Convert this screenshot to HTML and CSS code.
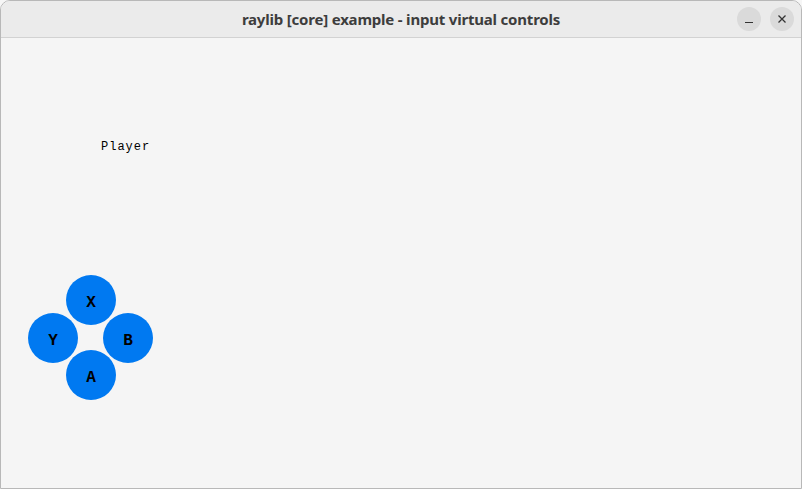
FILE: index.html
```html
<!DOCTYPE html>
<html>
<head>
<meta charset="utf-8">
<link rel="stylesheet" href="styles.css">
</head>
<body>
<div class="window">
  <header class="titlebar">
    <div class="title">raylib [core] example - input virtual controls</div>
    <div class="controls">
      <span class="wbtn"><svg width="10" height="10" viewBox="0 0 10 10"><path d="M1 8.5h8" stroke="#333" stroke-width="1.2"/></svg></span>
      <span class="wbtn"><svg width="10" height="10" viewBox="0 0 10 10"><path d="M1.5 1.5l7 7M8.5 1.5l-7 7" stroke="#333" stroke-width="1.3"/></svg></span>
    </div>
  </header>
  <main class="canvas">
    <div class="player">Player</div>
    <div class="pad pad-x">X</div>
    <div class="pad pad-y">Y</div>
    <div class="pad pad-b">B</div>
    <div class="pad pad-a">A</div>
  </main>
</div>
</body>
</html>
```
FILE: styles.css
```css
html, body {
  margin: 0;
  padding: 0;
  background: #f6f6f6;
}
.window {
  width: 802px;
  height: 489px;
  box-sizing: border-box;
  border: 1px solid #b8b8b8;
  border-radius: 10px 10px 0 0;
  overflow: hidden;
  display: flex;
  flex-direction: column;
  background: #f5f5f5;
}
.titlebar {
  height: 36px;
  flex: none;
  background: #ebebeb;
  border-bottom: 1px solid #d2d2d2;
  display: flex;
  align-items: center;
  justify-content: center;
  position: relative;
}
.title {
  font-family: "Noto Sans", sans-serif;
  font-weight: bold;
  font-size: 15px;
  color: #3d3d3d;
  letter-spacing: -0.2px;
}
.controls {
  position: absolute;
  right: 7px;
  top: 6px;
  display: flex;
  gap: 9px;
}
.wbtn {
  width: 24px;
  height: 24px;
  border-radius: 50%;
  background: #dadada;
  display: flex;
  align-items: center;
  justify-content: center;
}
.canvas {
  flex: 1;
  position: relative;
  background: #f5f5f5;
}
.player {
  position: absolute;
  left: 100px;
  top: 103px;
  font-family: "Liberation Mono", monospace;
  font-size: 12px;
  line-height: 12px;
  letter-spacing: 1px;
  color: #000;
}
.pad {
  position: absolute;
  width: 50px;
  height: 50px;
  border-radius: 50%;
  background: #0079f1;
  display: flex;
  align-items: center;
  justify-content: center;
  padding-top: 6px;
  box-sizing: border-box;
  font-family: "Liberation Mono", monospace;
  font-weight: bold;
  font-size: 16px;
  color: #000;
}
.pad-x { left: 65px; top: 237px; }
.pad-y { left: 27px; top: 275px; }
.pad-b { left: 102px; top: 275px; }
.pad-a { left: 65px; top: 312px; }
```
